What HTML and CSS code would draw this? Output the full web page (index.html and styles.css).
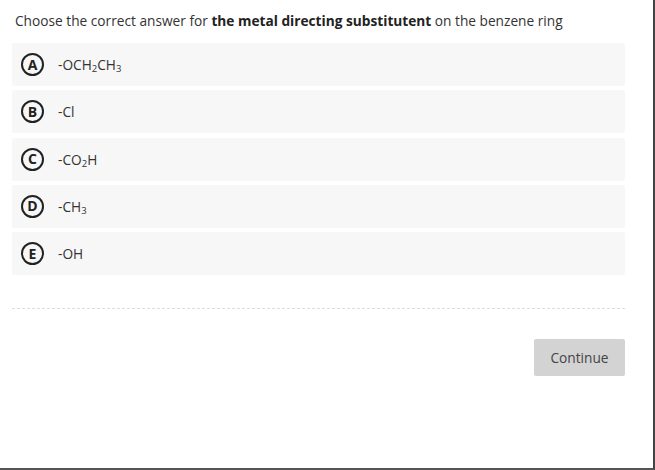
FILE: index.html
```html
<!DOCTYPE html>
<html>
<head>
<meta charset="utf-8">
<link rel="stylesheet" href="styles.css">
</head>
<body>
<div class="frame">
  <p class="question">Choose the correct answer for <b>the metal directing substitutent</b> on the benzene ring</p>
  <div class="options">
    <div class="option"><span class="letter">A</span><span class="answer">-OCH<sub>2</sub>CH<sub>3</sub></span></div>
    <div class="option"><span class="letter">B</span><span class="answer">-Cl</span></div>
    <div class="option"><span class="letter">C</span><span class="answer">-CO<sub>2</sub>H</span></div>
    <div class="option"><span class="letter">D</span><span class="answer">-CH<sub>3</sub></span></div>
    <div class="option"><span class="letter">E</span><span class="answer">-OH</span></div>
  </div>
  <div class="divider"></div>
  <div class="actions"><button class="continue">Continue</button></div>
</div>
</body>
</html>
```
FILE: styles.css
```css
html, body {
  margin: 0;
  padding: 0;
  background: #fff;
}
body {
  font-family: "Open Sans", "Liberation Sans", sans-serif;
  color: #333;
}
.frame {
  box-sizing: border-box;
  width: 655px;
  height: 470px;
  border-right: 2px solid #444;
  border-bottom: 2px solid #555;
  padding: 9px 0 0 12px;
}
.question {
  margin: 0 0 0 3px;
  font-size: 13.7px;
  line-height: 24px;
  color: #333;
}
.question b {
  font-weight: 700;
  color: #222;
}
.options {
  margin-top: 10px;
  width: 613px;
  display: flex;
  flex-direction: column;
  gap: 4.3px;
}
.option {
  height: 43px;
  background: #f7f7f7;
  border-radius: 2px;
  display: flex;
  align-items: center;
  padding-left: 9px;
}
.letter {
  box-sizing: border-box;
  width: 23px;
  height: 23px;
  border: 2px solid #222;
  border-radius: 50%;
  display: flex;
  align-items: center;
  justify-content: center;
  font-size: 14px;
  font-weight: 700;
  color: #222;
  line-height: 1;
}
.answer {
  margin-left: 14px;
  font-size: 13.7px;
  color: #333;
}
.answer sub {
  font-size: 9.5px;
  vertical-align: -2px;
  line-height: 0;
}
.divider {
  width: 613px;
  margin-top: 33px;
  border-top: 1px dashed #ddd;
}
.actions {
  width: 613px;
  display: flex;
  justify-content: flex-end;
  margin-top: 30px;
}
.continue {
  width: 91px;
  height: 37px;
  border: none;
  border-radius: 2px;
  background: #d3d3d3;
  color: #444;
  font-family: "Open Sans", "Liberation Sans", sans-serif;
  font-size: 13.7px;
  padding: 0;
}
```
